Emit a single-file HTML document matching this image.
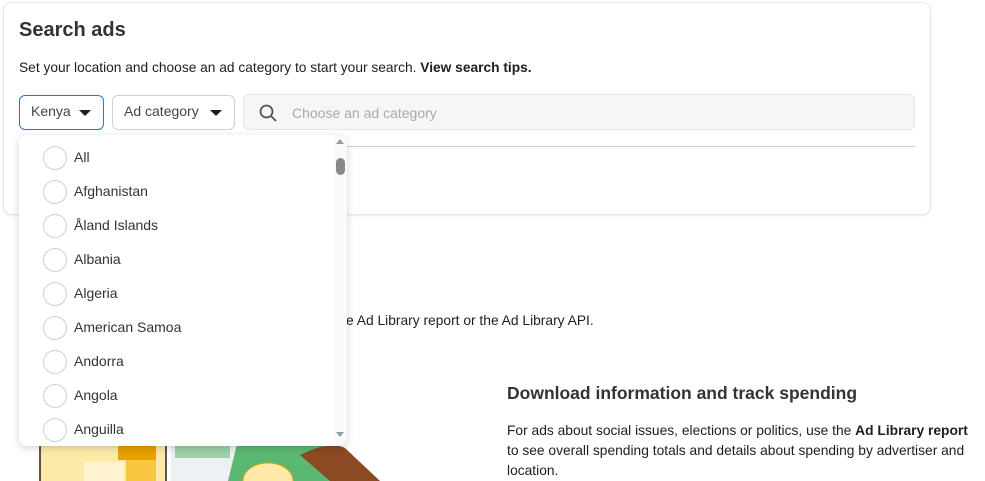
<!DOCTYPE html>
<html><head><style>
*{margin:0;padding:0;box-sizing:border-box}
body{width:985px;height:481px;overflow:hidden;background:#fff;font-family:"Liberation Sans",sans-serif;color:#1c1e21;position:relative}
.card{position:absolute;left:3px;top:2px;width:928px;height:213px;border:1px solid #e4e6eb;border-radius:8px;background:#fff;box-shadow:0 1px 2px rgba(0,0,0,.08)}
h1{position:absolute;left:19px;top:19px;font-size:20px;font-weight:bold;color:#333}
.sub{position:absolute;left:19px;top:60px;font-size:13.75px;color:#1c1e21}
.btn{position:absolute;top:95px;height:35px;border:1px solid #ccd0d5;border-radius:6px;font-size:14px;color:#444;padding:7px 0 0 11px}
.btn:after{content:"";position:absolute;right:12px;top:14px;border-left:6px solid transparent;border-right:6px solid transparent;border-top:6px solid #1c1e21}
.search{position:absolute;left:243px;top:94px;width:672px;height:36px;background:#f5f6f7;border:1px solid #e4e6eb;border-radius:6px;font-size:14px;color:#aaa;padding:10px 0 0 48px}
.line{position:absolute;left:346px;top:146px;width:569px;height:1px;background:#ccd0d5}
.dd{position:absolute;left:19px;top:135px;width:328px;height:311px;background:#fff;border-radius:8px;box-shadow:0 2px 8px rgba(0,0,0,.18);overflow:hidden}
.it{position:absolute;left:24px;height:24px;font-size:14px;color:#333}
.it i{position:absolute;left:0;top:0;width:24px;height:24px;border:1px solid #ccd0d5;border-radius:50%}
.it span{position:absolute;left:31px;top:3px;white-space:nowrap}
.sb{position:absolute;left:315px;top:0;width:13px;height:311px;background:#fafafa}
.txt{position:absolute;font-size:13.8px;color:#1c1e21}
</style></head><body>
<svg style="position:absolute;left:0;top:440px" width="420" height="41">
<rect x="40" y="0" width="126" height="41" fill="#fde9a8"/>
<path d="M40 0V41M166 0V41" stroke="#222" stroke-width="1.5"/>
<rect x="118" y="0" width="38" height="20" fill="#e8a100"/>
<rect x="126" y="20" width="30" height="21" fill="#f7c53f"/>
<rect x="84" y="22" width="40" height="19" fill="#fff3d4"/>
<rect x="171" y="0" width="172" height="41" fill="#eef1f4"/>
<rect x="175" y="0" width="55" height="18" fill="#9ed1a8"/>
<path d="M238 0H340V41H228Z" fill="#5bb872"/>
<ellipse cx="268" cy="41" rx="25" ry="18" fill="#fde9a8" stroke="#e8a100"/>
<path d="M300 15Q330 0 345 8L380 41H330Z" fill="#8b4a23"/>
</svg>
<div class="card">
</div>
<h1>Search ads</h1>
<div class="sub">Set your location and choose an ad category to start your search. <b>View search tips.</b></div>
<div class="btn" style="left:19px;width:85px;border:1.5px solid #1877f2">Kenya</div>
<div class="btn" style="left:112px;width:123px">Ad category</div>
<div class="search"><svg style="position:absolute;left:15px;top:9px" width="18" height="18"><circle cx="7.5" cy="7.5" r="6" stroke="#555" stroke-width="1.8" fill="none"/><path d="M12 12L17 17" stroke="#555" stroke-width="1.8"/></svg>Choose an ad category</div>
<div class="line"></div>
<div class="txt" style="left:346px;top:313px">e Ad Library report or the Ad Library API.</div>
<div class="txt" style="left:507px;top:383px;font-size:17.5px;font-weight:bold;color:#333">Download information and track spending</div>
<div class="txt" style="left:507px;top:421px;width:470px;line-height:20px">For ads about social issues, elections or politics, use the <b>Ad Library report</b> to see overall spending totals and details about spending by advertiser and location.</div>
<div class="dd">
<div class="it" style="top:11px"><i></i><span>All</span></div>
<div class="it" style="top:45px"><i></i><span>Afghanistan</span></div>
<div class="it" style="top:79px"><i></i><span>Åland Islands</span></div>
<div class="it" style="top:113px"><i></i><span>Albania</span></div>
<div class="it" style="top:147px"><i></i><span>Algeria</span></div>
<div class="it" style="top:181px"><i></i><span>American Samoa</span></div>
<div class="it" style="top:215px"><i></i><span>Andorra</span></div>
<div class="it" style="top:249px"><i></i><span>Angola</span></div>
<div class="it" style="top:283px"><i></i><span>Anguilla</span></div>
<div class="sb">
<div style="position:absolute;left:2px;top:4px;border-left:4px solid transparent;border-right:4px solid transparent;border-bottom:5px solid #999"></div>
<div style="position:absolute;left:2px;top:23px;width:9px;height:17px;border-radius:5px;background:#888"></div>
<div style="position:absolute;left:2px;top:297px;border-left:4px solid transparent;border-right:4px solid transparent;border-top:5px solid #999"></div>
</div>
</div>
</body></html>
